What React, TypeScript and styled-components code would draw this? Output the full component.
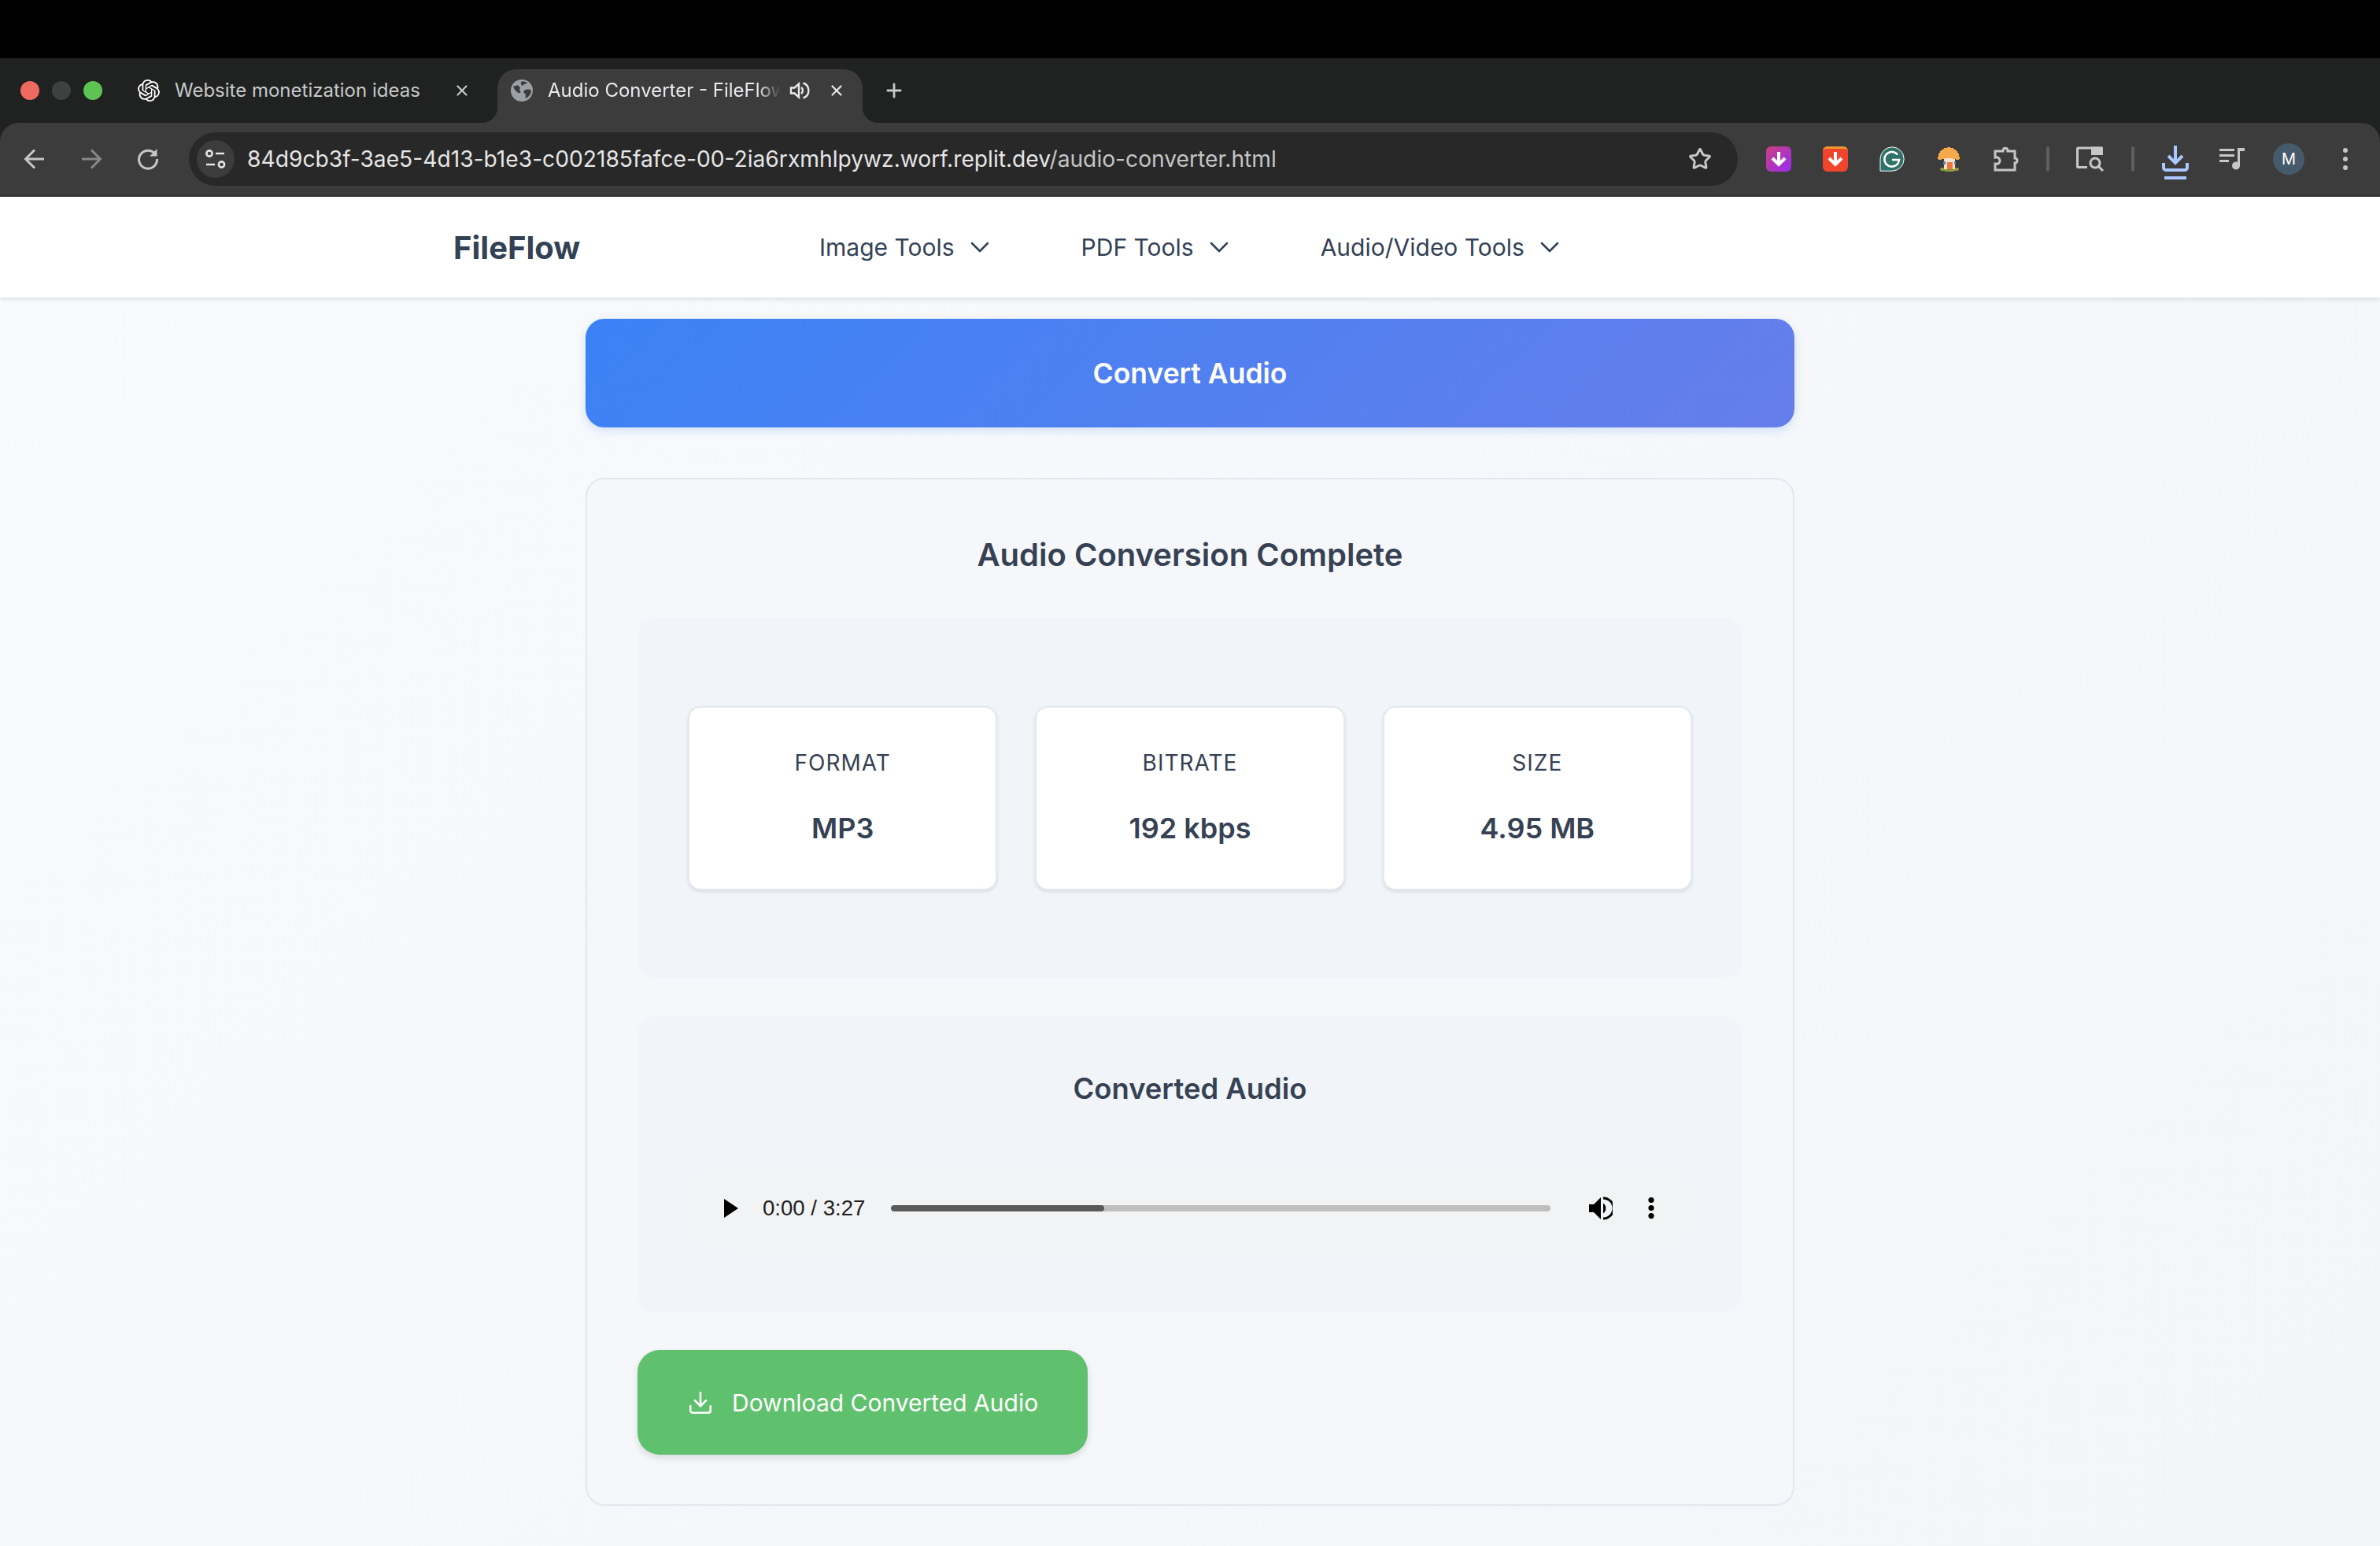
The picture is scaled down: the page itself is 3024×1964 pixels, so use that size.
import React from "react";
import styled, { createGlobalStyle } from "styled-components";
import { Download, Plus, X, Star } from "lucide-react";
import { SiOpenai } from "react-icons/si";

const GlobalStyle = createGlobalStyle`
  html, body {
    margin: 0;
    padding: 0;
    background: #f6f8fb;
  }
  * {
    box-sizing: border-box;
  }
  body {
    font-family: Inter, "Liberation Sans", sans-serif;
  }
`;

const Page = styled.div`
  width: 3024px;
  height: 1964px;
  overflow: hidden;
  display: flex;
  flex-direction: column;
  background: linear-gradient(135deg, #f8fafc 0%, #f3f5f9 100%);
`;

const TopBlack = styled.div`
  height: 74px;
  background: #000000;
`;

const BrowserFrame = styled.div`
  background: #202221;
`;

const TabStrip = styled.div`
  height: 82px;
  display: flex;
  align-items: flex-end;
  padding-left: 26px;
`;

const Lights = styled.div`
  width: 118px;
  height: 68px;
  padding-bottom: 14px;
  display: flex;
  align-items: center;
  gap: 16px;
`;

const Light = styled.span<{ $color: string }>`
  width: 24px;
  height: 24px;
  border-radius: 50%;
  background: ${(p) => p.$color};
`;

const Tab = styled.div<{ $active?: boolean }>`
  position: relative;
  height: 68px;
  width: ${(p) => (p.$active ? "464px" : "488px")};
  padding: ${(p) => (p.$active ? "0 22px 14px 17px" : "0 34px 14px 31px")};
  display: flex;
  align-items: center;
  gap: 19px;
  border-radius: 24px 24px 0 0;
  background: ${(p) => (p.$active ? "#3c3c3c" : "transparent")};
  color: ${(p) => (p.$active ? "#e8eaed" : "#c7c8c9")};

  ${(p) =>
    p.$active &&
    `
    &::before, &::after {
      content: "";
      position: absolute;
      bottom: 0;
      width: 20px;
      height: 20px;
    }
    &::before {
      left: -20px;
      background: radial-gradient(circle at 0 0, transparent 20px, #3c3c3c 20.5px);
    }
    &::after {
      right: -20px;
      background: radial-gradient(circle at 100% 0, transparent 20px, #3c3c3c 20.5px);
    }
  `}
`;

const TabTitle = styled.span<{ $fade?: boolean }>`
  flex: 1;
  min-width: 0;
  font-size: 24px;
  line-height: 32px;
  white-space: nowrap;
  overflow: hidden;
  ${(p) =>
    p.$fade &&
    `
    -webkit-mask-image: linear-gradient(90deg, #000 90%, transparent 100%);
    mask-image: linear-gradient(90deg, #000 90%, transparent 100%);
  `}
`;

const TabAction = styled.span`
  margin-left: -8px;
  display: flex;
  align-items: center;
  gap: 23px;
`;

const NewTab = styled.span`
  display: flex;
  height: 68px;
  padding-bottom: 14px;
  align-items: center;
  margin-left: 26px;
  color: #c7c8c9;
`;

const Toolbar = styled.div`
  height: 94px;
  padding: 0 8px;
  display: flex;
  align-items: center;
  background: #3c3c3c;
  border-bottom: 2px solid #333333;
  border-radius: 24px 24px 0 0;
`;

const ToolSlot = styled.span<{ $narrow?: boolean }>`
  flex: none;
  width: ${(p) => (p.$narrow ? "36px" : "72px")};
  height: 72px;
  display: flex;
  align-items: center;
  justify-content: center;
  color: #c7c7c7;
`;

const Divider = styled.span`
  width: 4px;
  height: 32px;
  border-radius: 2px;
  background: #5e5e5e;
`;

const AddressBar = styled.div`
  flex: 1;
  height: 68px;
  margin: 0 16px;
  padding: 0 33px 0 10px;
  display: flex;
  align-items: center;
  border-radius: 34px;
  background: #282828;
`;

const SiteInfo = styled.span`
  width: 48px;
  height: 48px;
  border-radius: 50%;
  background: #3c3c3c;
  display: flex;
  align-items: center;
  justify-content: center;
  color: #e3e3e3;
`;

const Url = styled.span`
  flex: 1;
  margin-left: 16px;
  font-size: 28.2px;
  color: #e6e6e6;
  white-space: nowrap;
`;

const UrlPath = styled.span`
  color: #c4c4c4;
`;

const Avatar = styled.span`
  width: 40px;
  height: 40px;
  border-radius: 50%;
  background: #455a6b;
  color: #ffffff;
  font-size: 20px;
  display: flex;
  align-items: center;
  justify-content: center;
`;

const NavBar = styled.nav`
  height: 128px;
  padding-left: 576px;
  display: flex;
  align-items: center;
  background: #ffffff;
  box-shadow: 0 2px 6px rgba(0, 0, 0, 0.12);
  color: #334155;
`;

const Logo = styled.span`
  width: 465px;
  font-size: 40px;
  font-weight: 700;
`;

const NavLinks = styled.div`
  display: flex;
  gap: 117px;
`;

const NavLink = styled.span`
  display: flex;
  align-items: center;
  gap: 20px;
  font-size: 30px;
  line-height: 48px;
`;

const Main = styled.main`
  width: 1536px;
  margin: 27px auto 0;
`;

const ConvertButton = styled.div`
  height: 138px;
  display: flex;
  align-items: center;
  justify-content: center;
  border-radius: 24px;
  background: linear-gradient(135deg, #3b82f6, #667eea);
  box-shadow: 0 4px 12px rgba(59, 130, 246, 0.2);
  color: #ffffff;
  font-size: 35.5px;
  font-weight: 600;
`;

const ResultCard = styled.section`
  margin-top: 64px;
  height: 1306px;
  padding: 64px;
  border: 2px solid #e2e8f0;
  border-radius: 24px;
  background: #f5f7fa;
`;

const ResultTitle = styled.h2`
  margin: 0 0 48px;
  font-size: 40px;
  line-height: 64px;
  font-weight: 600;
  text-align: center;
  color: #364153;
`;

const Panel = styled.div<{ $bottom: number }>`
  margin-bottom: 48px;
  padding: 64px 64px ${(p) => p.$bottom}px;
  border-radius: 24px;
  background: #f1f5f9;
`;

const StatGrid = styled.div`
  margin: 48px 0;
  display: grid;
  grid-template-columns: repeat(3, 1fr);
  gap: 48px;
`;

const StatCard = styled.div`
  height: 234px;
  padding-top: 54px;
  border: 2px solid #e2e8f0;
  border-radius: 16px;
  background: #ffffff;
  box-shadow: 0 2px 4px rgba(0, 0, 0, 0.1);
  text-align: center;
  color: #364153;
`;

const StatLabel = styled.div`
  font-size: 28px;
  line-height: 32px;
  letter-spacing: 1px;
`;

const StatValue = styled.div`
  margin-top: 42px;
  font-size: 36px;
  line-height: 50px;
  font-weight: 600;
`;

const PanelTitle = styled.h3`
  margin: 0 0 71px;
  font-size: 36.4px;
  line-height: 56px;
  font-weight: 600;
  text-align: center;
  color: #364153;
`;

const Player = styled.div`
  height: 106px;
  padding: 0 48px 0 46px;
  display: flex;
  align-items: center;
  border-radius: 53px;
  background: #f1f3f4;
`;

const TimeText = styled.span`
  margin-left: 31px;
  font-family: "Liberation Sans", sans-serif;
  font-size: 27.6px;
  color: #1f1f1f;
  white-space: nowrap;
`;

const Track = styled.div`
  flex: 1;
  height: 8px;
  margin: 0 49px 0 33px;
  border-radius: 4px;
  background: #bfbfbf;
  overflow: hidden;
`;

const TrackFill = styled.div`
  width: 32.3%;
  height: 100%;
  border-radius: 4px;
  background: #5a5a5a;
`;

const PlayerMenu = styled.span`
  margin-left: 45px;
  display: flex;
`;

const DownloadButton = styled.div`
  width: 572px;
  height: 133px;
  padding-left: 63px;
  display: flex;
  align-items: center;
  gap: 23px;
  border-radius: 28px;
  background: #5fc16d;
  box-shadow: 0 4px 10px rgba(0, 0, 0, 0.12);
  color: #ffffff;
  font-size: 30px;
`;

const BackIcon = () => (
  <svg width="28" height="28" viewBox="0 0 28 28" fill="none" stroke="currentColor" strokeWidth="3">
    <path d="M26 14H3M14 2.5 2.5 14 14 25.5" />
  </svg>
);

const ForwardIcon = () => (
  <svg width="28" height="28" viewBox="0 0 28 28" fill="none" stroke="currentColor" strokeWidth="3" opacity={0.55}>
    <path d="M2 14h23M14 2.5 25.5 14 14 25.5" />
  </svg>
);

const ReloadIcon = () => (
  <svg width="28" height="28" viewBox="0 0 28 28" fill="none" stroke="currentColor" strokeWidth="3">
    <path d="M23 7.5A11.5 11.5 0 1 0 25.5 14" />
    <path d="M25.5 1v9.5H16" fill="currentColor" stroke="none" />
  </svg>
);

const TuneIcon = () => (
  <svg width="26" height="24" viewBox="0 0 26 24" fill="none" stroke="currentColor" strokeWidth="2.6">
    <circle cx="5" cy="5" r="3.6" />
    <path d="M13 5h11M1 19h11" />
    <circle cx="20.5" cy="19" r="3.6" />
  </svg>
);

const GlobeIcon = () => (
  <svg width="28" height="28" viewBox="0 0 28 28">
    <circle cx="14" cy="14" r="14" fill="#9aa0a6" />
    <path d="M3 9c3-1 6-3 8 0 2 2-1 4 1 6s-2 3-4 1-4-4-5-7ZM17 14c3-2 7-2 9 0 0 4-3 8-7 10-1-3 1-5-1-6-2-1-2-3-1-4ZM13 3c3-1 6 0 8 1-1 2-4 1-5 3s-4 0-3-4Z" fill="#3c3c3c" />
  </svg>
);

const SpeakerIcon = () => (
  <svg width="26" height="26" viewBox="0 0 26 26" fill="none" stroke="currentColor" strokeWidth="2.4">
    <path d="M2 9.5h4.5L12 4.5v17l-5.5-5H2z" fill="#3c3c3c" />
    <path d="M15 9a5 5 0 0 1 0 8" />
    <path d="M17.5 3.5a10 10 0 0 1 0 19" />
  </svg>
);

const ChevronIcon = () => (
  <svg width="24" height="14" viewBox="0 0 24 14" fill="none" stroke="currentColor" strokeWidth="2.6" strokeLinecap="round" strokeLinejoin="round">
    <path d="M2 2l10 10L22 2" />
  </svg>
);

const ArrowTile = ({ background, top }: { background: string; top?: string }) => (
  <svg width="32" height="32" viewBox="0 0 32 32">
    <defs>
      <linearGradient id="tileShade" x1="0" y1="0" x2="1" y2="1">
        <stop offset="0" stopColor="#c9407f" />
        <stop offset="1" stopColor="#9a2cf0" />
      </linearGradient>
    </defs>
    <rect width="32" height="32" rx="6" fill={background} />
    {top && <path d="M0 6a6 6 0 0 1 6-6h20a6 6 0 0 1 6 6v0a4 4 0 0 0-4-3H4a4 4 0 0 0-4 3z" fill={top} />}
    <path d="M16 7v16M8 15l8 8 8-8" fill="none" stroke="#ffffff" strokeWidth="4" />
  </svg>
);

const GrammarlyIcon = () => (
  <svg width="32" height="32" viewBox="0 0 32 32">
    <path d="M16 0.8A15.2 15.2 0 1 1 16 31.2H1V16A15.2 15.2 0 0 1 16 0.8Z" fill="#2f7268" stroke="#ffffff" strokeWidth="1" />
    <path d="M23 10.5A9.3 9.3 0 1 0 25 17H16" fill="none" stroke="#ffffff" strokeWidth="2.6" />
  </svg>
);

const MushroomIcon = () => (
  <svg width="32" height="32" viewBox="0 0 32 32" shapeRendering="crispEdges">
    <ellipse cx="17" cy="29" rx="12.5" ry="3" fill="#8c9a34" />
    <rect x="10" y="15" width="14" height="14" fill="#efe3cf" />
    <rect x="14" y="20" width="7" height="9" fill="#e9763f" />
    <rect x="9" y="19" width="3" height="4" fill="#5b7fa3" />
    <rect x="23" y="19" width="2" height="4" fill="#5b7fa3" />
    <path d="M2 15C2 7 9 1 16 1s14 6 14 14c0 2-3 3-6 1-2-1-14-1-16 0-3 2-6 1-6-1Z" fill="#f5a94b" />
  </svg>
);

const PuzzleIcon = () => (
  <svg width="34" height="34" viewBox="0 0 34 34" fill="none" stroke="currentColor" strokeWidth="3">
    <path d="M4 7h10c0-5 6-5 6 0h9v9c4 0 4 6 0 6v9H4v-8c5 1 6-2 6-4s-2-5-6-4z" />
  </svg>
);

const TabSearchIcon = () => (
  <svg width="36" height="32" viewBox="0 0 36 32" fill="none" stroke="currentColor" strokeWidth="3">
    <path d="M14 26.5H2.5a1 1 0 0 1-1-1V3a1 1 0 0 1 1-1H32" />
    <path d="M19 0.5h14a1 1 0 0 1 1 1V11H19z" fill="currentColor" stroke="none" />
    <circle cx="24" cy="21" r="6" />
    <path d="M28.5 25.5 34 31" />
  </svg>
);

const DownloadTrayIcon = () => (
  <svg width="34" height="54" viewBox="0 -10 34 54" fill="none" stroke="#aac7ff" strokeWidth="4">
    <path d="M17 0v20M8 13l9 9 9-9" />
    <path d="M2 22v6a3 3 0 0 0 3 3h24a3 3 0 0 0 3-3v-6" />
    <path d="M3 41h28" />
  </svg>
);

const MediaIcon = () => (
  <svg width="32" height="28" viewBox="0 0 32 28" fill="currentColor">
    <path d="M0 1h19v3H0zM0 8h19v3H0zM0 15h12v3H0z" />
    <circle cx="21" cy="22.5" r="5" />
    <path d="M23 0h9v4h-6v19h-3z" />
  </svg>
);

const DotsIcon = ({ color, size, gap, r }: { color: string; size: number; gap: number; r: number }) => (
  <svg width={size} height={gap * 2 + r * 2} viewBox={`0 0 ${size} ${gap * 2 + r * 2}`} fill={color}>
    <circle cx={size / 2} cy={r} r={r} />
    <circle cx={size / 2} cy={r + gap} r={r} />
    <circle cx={size / 2} cy={r + gap * 2} r={r} />
  </svg>
);

const PlayIcon = () => (
  <svg width="18" height="24" viewBox="0 0 18 24" fill="#000000">
    <path d="M0 0 18 12 0 24z" />
  </svg>
);

const VolumeIcon = () => (
  <svg width="30" height="30" viewBox="0 0 30 30">
    <path d="M0 10h6l9-9v28l-9-9H0z" fill="#000000" />
    <path d="M18 8.5a8 8 0 0 1 0 13z" fill="#000000" />
    <path d="M18 2a13 13 0 0 1 0 26" fill="none" stroke="#000000" strokeWidth="3" />
  </svg>
);

const App = () => (
  <Page>
    <GlobalStyle />
    <TopBlack />
    <BrowserFrame>
      <TabStrip>
        <Lights>
          <Light $color="#ee6a5f" />
          <Light $color="#3f4140" />
          <Light $color="#5dc453" />
        </Lights>
        <Tab>
          <SiOpenai size={28} color="#ffffff" />
          <TabTitle>Website monetization ideas</TabTitle>
          <X size={22} strokeWidth={2.4} />
        </Tab>
        <Tab $active>
          <GlobeIcon />
          <TabTitle $fade>Audio Converter - FileFlow</TabTitle>
          <TabAction>
            <SpeakerIcon />
            <X size={22} strokeWidth={2.4} />
          </TabAction>
        </Tab>
        <NewTab>
          <Plus size={28} strokeWidth={2.4} />
        </NewTab>
      </TabStrip>
      <Toolbar>
        <ToolSlot>
          <BackIcon />
        </ToolSlot>
        <ToolSlot>
          <ForwardIcon />
        </ToolSlot>
        <ToolSlot>
          <ReloadIcon />
        </ToolSlot>
        <AddressBar>
          <SiteInfo>
            <TuneIcon />
          </SiteInfo>
          <Url>
            84d9cb3f-3ae5-4d13-b1e3-c002185fafce-00-2ia6rxmhlpywz.worf.replit.dev
            <UrlPath>/audio-converter.html</UrlPath>
          </Url>
          <Star size={30} strokeWidth={2.4} color="#c7c7c7" />
        </AddressBar>
        <ToolSlot>
          <ArrowTile background="url(#tileShade)" />
        </ToolSlot>
        <ToolSlot>
          <ArrowTile background="#f0452c" top="#f09a2c" />
        </ToolSlot>
        <ToolSlot>
          <GrammarlyIcon />
        </ToolSlot>
        <ToolSlot>
          <MushroomIcon />
        </ToolSlot>
        <ToolSlot>
          <PuzzleIcon />
        </ToolSlot>
        <ToolSlot $narrow>
          <Divider />
        </ToolSlot>
        <ToolSlot>
          <TabSearchIcon />
        </ToolSlot>
        <ToolSlot $narrow>
          <Divider />
        </ToolSlot>
        <ToolSlot>
          <DownloadTrayIcon />
        </ToolSlot>
        <ToolSlot>
          <MediaIcon />
        </ToolSlot>
        <ToolSlot>
          <Avatar>M</Avatar>
        </ToolSlot>
        <ToolSlot>
          <DotsIcon color="#c7c7c7" size={8} gap={11} r={3} />
        </ToolSlot>
      </Toolbar>
    </BrowserFrame>
    <NavBar>
      <Logo>FileFlow</Logo>
      <NavLinks>
        <NavLink>
          Image Tools <ChevronIcon />
        </NavLink>
        <NavLink>
          PDF Tools <ChevronIcon />
        </NavLink>
        <NavLink>
          Audio/Video Tools <ChevronIcon />
        </NavLink>
      </NavLinks>
    </NavBar>
    <Main>
      <ConvertButton>Convert Audio</ConvertButton>
      <ResultCard>
        <ResultTitle>Audio Conversion Complete</ResultTitle>
        <Panel $bottom={64}>
          <StatGrid>
            <StatCard>
              <StatLabel>FORMAT</StatLabel>
              <StatValue>MP3</StatValue>
            </StatCard>
            <StatCard>
              <StatLabel>BITRATE</StatLabel>
              <StatValue>192 kbps</StatValue>
            </StatCard>
            <StatCard>
              <StatLabel>SIZE</StatLabel>
              <StatValue>4.95 MB</StatValue>
            </StatCard>
          </StatGrid>
        </Panel>
        <Panel $bottom={79}>
          <PanelTitle>Converted Audio</PanelTitle>
          <Player>
            <PlayIcon />
            <TimeText>0:00 / 3:27</TimeText>
            <Track>
              <TrackFill />
            </Track>
            <VolumeIcon />
            <PlayerMenu>
              <DotsIcon color="#000000" size={8} gap={10} r={3.6} />
            </PlayerMenu>
          </Player>
        </Panel>
        <DownloadButton>
          <Download size={34} strokeWidth={1.8} />
          Download Converted Audio
        </DownloadButton>
      </ResultCard>
    </Main>
  </Page>
);

export default App;
